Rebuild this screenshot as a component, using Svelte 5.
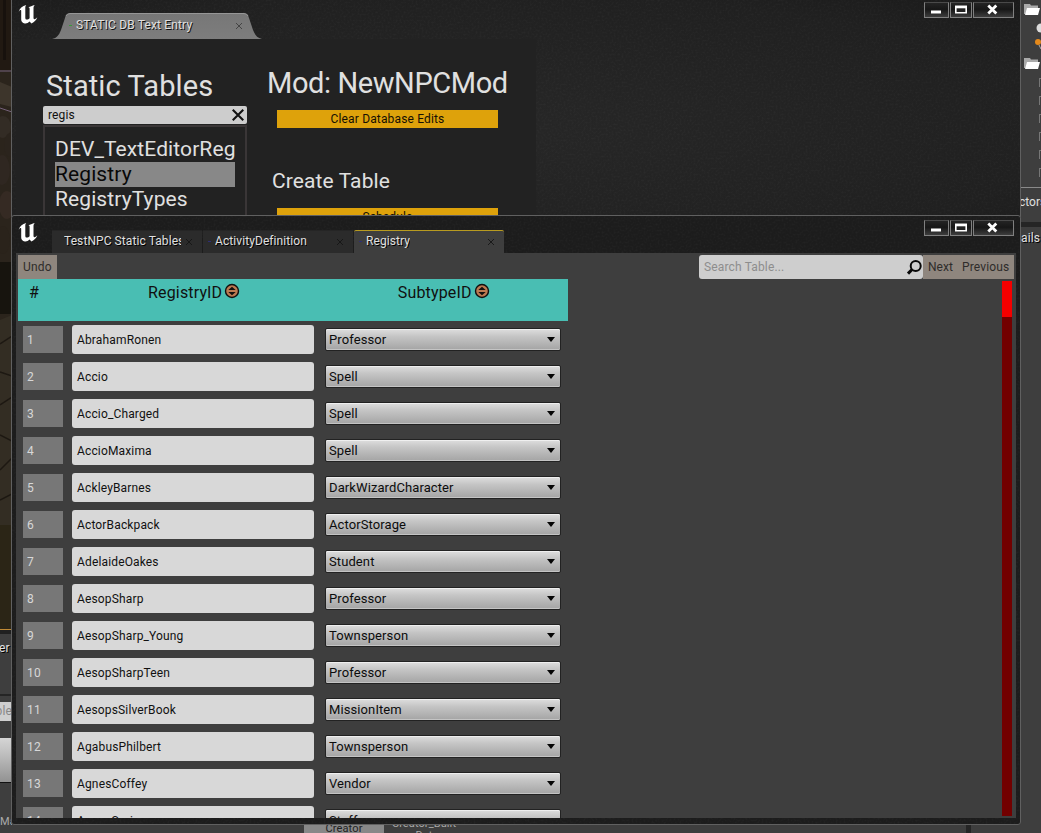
<script lang="ts">
  type Row = { id: string; subtype: string };

  const rows: Row[] = [
    { id: 'AbrahamRonen', subtype: 'Professor' },
    { id: 'Accio', subtype: 'Spell' },
    { id: 'Accio_Charged', subtype: 'Spell' },
    { id: 'AccioMaxima', subtype: 'Spell' },
    { id: 'AckleyBarnes', subtype: 'DarkWizardCharacter' },
    { id: 'ActorBackpack', subtype: 'ActorStorage' },
    { id: 'AdelaideOakes', subtype: 'Student' },
    { id: 'AesopSharp', subtype: 'Professor' },
    { id: 'AesopSharp_Young', subtype: 'Townsperson' },
    { id: 'AesopSharpTeen', subtype: 'Professor' },
    { id: 'AesopsSilverBook', subtype: 'MissionItem' },
    { id: 'AgabusPhilbert', subtype: 'Townsperson' },
    { id: 'AgnesCoffey', subtype: 'Vendor' },
    { id: 'AgnesSpring', subtype: 'Staff' },
  ];

  const tabs = ['TestNPC Static Tables', 'ActivityDefinition', 'Registry'];
  const tables = ['DEV_TextEditorReg', 'Registry', 'RegistryTypes'];

  let activeTab = $state(2);
  let activeTable = $state('Registry');
</script>

{#snippet logo()}
  <svg class="logo" viewBox="0 0 20 20">
    <path d="M0.6 8.2C1.6 4.4 4.2 2 8.3 1C7.5 1.9 7.3 2.6 7.3 3.8V13.7C7.3 15 7.8 15.6 8.8 15.6C10 15.6 10.9 15.1 11.6 14.3V4.8C11.6 3.8 11.2 3.4 10.3 3.5C12.2 2.7 14.2 1.6 16.8 1C15.8 2 15.5 2.8 15.5 4V13.8C15.5 15 16 15.4 16.8 15.2C17.5 15 18.3 14.4 19.3 13.3C18.4 16 16.5 18 13.4 19.6L11.6 17.5C10.2 19 8.5 19.6 6.8 19.4C4.4 19.1 3.2 17.8 3.2 15.6V6.8C3.2 5.8 2.6 5.8 2 6.3C1.5 6.8 1 7.4 .6 8.2Z" />
  </svg>
{/snippet}

{#snippet controls()}
  <div class="controls">
    <button class="ctl"><svg width="23" height="14"><path d="M6 7.5h10v3H6z" fill="#fff" /></svg></button>
    <button class="ctl max"><svg width="20" height="14"><path d="M4.8 3.5h10.4v6.2H4.8z" fill="#222" stroke="#fff" stroke-width="1.6" /><path d="M4 2.7h12v2.6H4z" fill="#fff" /></svg></button>
    <button class="ctl close"><svg width="39" height="14"><path d="M14.3 2.5l8 8M22.3 2.5l-8 8" stroke="#fff" stroke-width="2.8" /></svg></button>
  </div>
{/snippet}

{#snippet cross(size: number)}
  <svg class="cross" width={size} height={size} viewBox="0 0 8 8"><path d="M1 1l6 6M7 1L1 7" /></svg>
{/snippet}

{#snippet folder()}
  <svg class="folder" viewBox="0 0 17 13">
    <path d="M0 1h6l1 1.5h7V11H0z" fill="#aaa" />
    <path d="M3 5h13l-2 7H1z" fill="#fff" />
  </svg>
{/snippet}

{#snippet grain(id: string)}
  <svg class="grain" width="100%" height="100%">
    <filter {id}>
      <feTurbulence type="fractalNoise" baseFrequency="0.5" numOctaves="2" />
      <feColorMatrix values="0 0 0 0 1  0 0 0 0 1  0 0 0 0 1  1.2 0 0 0 -0.5" />
    </filter>
    <rect width="100%" height="100%" filter="url(#{id})" />
  </svg>
{/snippet}

<div class="desktop">
  <!-- viewport and panels behind the windows -->
  <div class="left-strip">
    <svg class="scene" viewBox="0 0 12 629" preserveAspectRatio="none">
      <path d="M0 0h12v629H0z" fill="#2b241c" />
      <path d="M0 0h12v70H0z" fill="#211912" />
      <path d="M3 0h3v60H3z" fill="#17110d" />
      <path d="M0 82l12 5v20l-12-3z" fill="#3d352b" />
      <ellipse cx="3" cy="127" rx="8" ry="11" fill="#332c25" />
      <ellipse cx="10" cy="145" rx="6" ry="12" fill="#2b241d" />
      <ellipse cx="2" cy="170" rx="8" ry="15" fill="#2f2721" />
      <ellipse cx="7" cy="205" rx="8" ry="14" fill="#352a23" />
      <ellipse cx="3" cy="240" rx="7" ry="14" fill="#2a231b" />
      <path d="M0 262h12v52H0z" fill="#17140e" />
      <path d="M0 320l12-5v210H0z" fill="#332d23" />
      <path d="M0 344l12-8M0 372l12 4M0 405l12-8M0 435l12 6M0 470l12-12M0 500l12-6" stroke="#1d1812" stroke-width="1.5" />
      <path d="M0 525h12v104H0z" fill="#2b2516" />
      <path d="M0 71h12M0 108l12 4" stroke="#75617a" stroke-width="1" />
    </svg>
    <div class="strip-title">er</div>
    <div class="strip-search"><span>ble</span></div>
    <div class="strip-button"></div>
    <div class="strip-foot">Ma</div>
  </div>

  <div class="right-strip">
    <div class="tree">
      {@render folder()}
      <svg class="actors" width="7" height="32"><circle cx="7" cy="8" r="4.5" fill="#ddd" /><circle cx="4" cy="22" r="3" fill="#e58a1c" /><path d="M5 25l2 4" stroke="#aaa" /></svg>
      {@render folder()}
      <div class="marks">
        {#each [0, 1, 2, 3, 4, 5] as mark (mark)}
          <i></i>
        {/each}
      </div>
    </div>
    <div class="actor-count"><span>ctors</span></div>
    <div class="details"><span>ails</span></div>
  </div>

  <div class="bottom-strip">
    <div class="creator"><span>Creator</span></div>
    <div class="asset"><span>Creator_Built</span><span>Dat</span></div>
    <div class="divider"></div>
  </div>

  <section class="window back">
    {@render grain('grain-back')}
    <header class="titlebar">
      {@render logo()}
      <div class="major-tab">
        <svg class="tab-shape" viewBox="0 0 210 26">
          <defs>
            <linearGradient id="tab" x1="0" y1="0" x2="0" y2="1">
              <stop offset="0" stop-color="#777" />
              <stop offset="1" stop-color="#7d7d7d" />
            </linearGradient>
          </defs>
          <path d="M0 26C5 25 7 22 9 17L13 5C14 1.5 15 .5 18 .5H192C195 .5 196 1.5 197 5L201 17C203 22 205 25 210 26Z" fill="url(#tab)" />
          <path d="M14 3Q15 .5 18 .5H192Q195 .5 196 3" fill="none" stroke="#969696" />
        </svg>
        <i class="dot green"></i>
        <span>STATIC DB Text Entry</span>
        {@render cross(8)}
      </div>
      {@render controls()}
    </header>
    <div class="entry">
      <div class="tables">
        <h1>Static Tables</h1>
        <div class="filter"><span>regis</span>{@render cross(14)}</div>
        <ul>
          {#each tables as table (table)}
            <li>
              <button class:selected={table === activeTable} onclick={() => (activeTable = table)}>{table}</button>
            </li>
          {/each}
        </ul>
      </div>
      <div class="mod">
        <h1>Mod: NewNPCMod</h1>
        <button class="gold">Clear Database Edits</button>
        <h2>Create Table</h2>
        <button class="gold">Schedule</button>
      </div>
    </div>
  </section>

  <section class="window front">
    {@render grain('grain-front')}
    <header class="titlebar">
      {@render logo()}
      <nav class="tabs">
        {#each tabs as tab, i (tab)}
          <button class="tab" class:active={i === activeTab} onclick={() => (activeTab = i)}>
            <i class="dot" class:hidden={i === 0}></i>
            <span class="tab-name">{tab}</span>
            {@render cross(8)}
          </button>
        {/each}
      </nav>
      {@render controls()}
    </header>
    <div class="content">
      <div class="toolbar">
        <button class="tool undo">Undo</button>
        <div class="search">
          <span>Search Table...</span>
          <svg width="17" height="17" viewBox="0 0 17 17"><circle cx="9.7" cy="7" r="5" /><path d="M6 10.5L2 14.6" /></svg>
        </div>
        <button class="tool next">Next</button>
        <button class="tool prev">Previous</button>
      </div>
      <div class="body">
        <div class="table">
          <div class="thead">
            <span class="hash">#</span>
            {#each ['RegistryID', 'SubtypeID'] as column (column)}
              <span class="column">
                {column}
                <svg width="16" height="16" viewBox="0 0 16 16">
                  <circle cx="8" cy="8" r="6.5" fill="#bd7a52" stroke="#101010" stroke-width="1.4" />
                  <path d="M4.3 7L8 3.7L11.7 7zM4.3 9L8 12.3L11.7 9z" fill="#14100e" />
                </svg>
              </span>
            {/each}
          </div>
          {#each rows as row, i (row.id)}
            <div class="row">
              <div class="num">{i + 1}</div>
              <div class="field"><span>{row.id}</span></div>
              <button class="select"><span>{row.subtype}</span><i class="arrow"></i></button>
            </div>
          {/each}
        </div>
        <div class="scrollbar"><div class="thumb"></div></div>
      </div>
    </div>
  </section>
</div>

<style>
  :global(body) { background: #3e3e3e; overflow: hidden; }

  .desktop {
    position: relative;
    width: 1041px;
    height: 833px;
    overflow: hidden;
    background: #3e3e3e;
    font-family: Roboto, "Liberation Sans", sans-serif;
    font-size: 12px;
    letter-spacing: 0.15px;
    color: #e0e0e0;
  }

  .desktop * { box-sizing: border-box; }
  button { font: inherit; letter-spacing: inherit; color: inherit; border: 0; padding: 0; margin: 0; background: none; text-align: left; border-radius: 0; }
  h1, h2, ul { margin: 0; padding: 0; font-weight: 400; list-style: none; }
  svg { display: block; flex-shrink: 0; }
  span { white-space: nowrap; }

  /* Background panels */
  .left-strip { width: 12px; height: 833px; overflow: hidden; display: flex; flex-direction: column; }
  .scene { width: 12px; height: 629px; }
  .strip-title {
    height: 67px;
    padding-top: 11px;
    line-height: 14px;
    background: #3e3e3e;
    border-top: 1px solid #c08a35;
    box-shadow: inset 0 4px #202020, inset 0 -2px #252525;
    text-shadow: 1px 1px #000;
    margin-left: -1px;
  }
  .strip-search { height: 19px; margin-top: 6px; background: #cfcfcf; color: #888; display: flex; justify-content: flex-end; line-height: 19px; }
  .strip-button { height: 45px; margin-top: 17px; background: linear-gradient(#d5d5d5, #bcbcbc 40%, #929292); border-bottom: 1px solid #111; }
  .strip-foot { margin-top: 32px; line-height: 14px; font-size: 11px; color: #aaa; }

  .right-strip { position: absolute; left: 1021px; top: 0; width: 20px; height: 833px; overflow: hidden; background: #3e3e3e; }
  .tree { height: 188px; padding: 3px 0 0 3px; border-bottom: 1px solid #8a8a8a; }
  .folder { width: 17px; height: 13px; }
  .actors { margin: 4px 0 5px 10px; }
  .marks { display: flex; flex-direction: column; gap: 9px; padding: 8px 0 0 15px; }
  .marks i { height: 9px; width: 4px; border: 1px solid #777; border-right: 0; border-bottom: 0; }
  .actor-count { height: 34px; line-height: 28px; margin-left: -2px; letter-spacing: 0; }
  .details { border-top: 5px solid #252525; line-height: 22px; text-shadow: 1px 1px #000; }

  .bottom-strip { position: absolute; left: 304px; top: 818px; width: 720px; height: 15px; display: flex; overflow: hidden; }
  .creator { width: 80px; background: #888; color: #222; text-align: center; line-height: 21px; font-size: 11px; }
  .asset { width: 80px; font-size: 11px; letter-spacing: 0.1px; color: #aaa; text-align: center; display: flex; flex-direction: column; line-height: 12px; }
  .divider { width: 5px; margin-left: 502px; background: #252525; }

  /* Windows */
  .window { position: absolute; left: 11px; width: 1010px; border: 1px solid #606060; border-top: 0; background: #1c1c1c; }
  .back { top: 0; height: 217px; background: radial-gradient(ellipse at 45% 60%, #272727, #202020 75%, #1a1a1a); }
  .front { top: 215px; height: 610px; border-top: 1px solid #606060; border-radius: 3px; background: #1c1c1c; }
  .grain { position: absolute; left: 0; top: 0; opacity: .06; }
  .titlebar { position: relative; display: flex; align-items: flex-start; padding-left: 5px; }
  .back .titlebar { height: 39px; }
  .front .titlebar { height: 37px; }
  .logo { width: 20px; height: 20px; fill: #fff; margin: 4px 0 0 1px; }
  .front .logo { margin-top: 6px; }

  .controls { display: flex; margin: 2px 6px 0 auto; gap: 1px; }
  .front .controls { margin-top: 4px; }
  .ctl { height: 16px; width: 25px; border: 1px solid #808080; border-top-color: #4a4a4a; background: linear-gradient(#242424, #171717 45%, #3d3d3d); overflow: hidden; }
  .ctl.max { width: 22px; }
  .ctl.close { width: 41px; }

  .cross { fill: none; stroke: currentColor; }
  .dot { width: 3px; height: 1px; background: #2d2d78; }
  .dot.hidden { visibility: hidden; }
  .dot.green { background: #3a9a3a; }

  .major-tab { position: relative; display: flex; align-items: center; width: 210px; height: 26px; margin: 13px 0 0 14px; padding: 0 19px 2px 17px; text-shadow: 1px 1px #111; }
  .tab-shape { position: absolute; left: 0; top: 0; width: 210px; height: 26px; }
  .major-tab > span, .major-tab > .dot, .major-tab > .cross { position: relative; }
  .major-tab > span { margin-left: 4px; }
  .major-tab > .cross { margin-left: auto; top: 1px; color: #444; }

  .entry { position: relative; display: flex; height: 177px; width: 520px; margin-left: 4px; background: #222; overflow: hidden; }
  .tables { width: 204px; margin-left: 27px; padding-top: 29px; }
  .tables h1 { font-size: 29px; line-height: 36px; padding-left: 3px; letter-spacing: 0.1px; }
  .filter { display: flex; align-items: center; justify-content: space-between; height: 18px; margin-top: 2px; padding: 0 2px 1px 5px; border-radius: 2px; background: #cdcdcd; color: #111; }
  .filter .cross { stroke-width: 1.2; }
  .tables ul { height: 100px; margin-top: 1px; padding: 10px; border: 2px solid #3a3637; }
  .tables li button { display: block; width: 180px; height: 25px; line-height: 25px; font-size: 21px; letter-spacing: 0.1px; }
  .tables li button.selected { background: #888; color: #080808; }

  .mod { width: 245px; margin-left: 20px; padding-top: 26px; }
  .mod h1 { font-size: 29px; line-height: 36px; letter-spacing: -0.4px; white-space: nowrap; }
  .mod h2 { font-size: 21px; line-height: 26px; margin: 40px 0 14px 5px; letter-spacing: 0.1px; }
  .gold { display: block; width: 221px; height: 18px; margin-left: 10px; background: #dea20b; color: #161003; text-align: center; line-height: 18px; }
  .mod h1 + .gold { margin-top: 9px; }

  .tabs { display: flex; gap: 1px; margin: 14px 0 0 14px; }
  .tab { display: flex; align-items: center; width: 150px; height: 23px; padding: 0 9px 2px 5px; background: #2b2b2b; text-shadow: 1px 1px #000; border-top: 1px solid #252525; }
  .tab.active { background: #3e3e3e; border-top: 1px solid #b89b20; border-radius: 2px 2px 0 0; }
  .tab-name { max-width: 117px; overflow: hidden; margin-left: 4px; letter-spacing: 0.08px; }
  .tab .cross { margin-left: auto; color: #151515; stroke-width: .9; position: relative; top: 1px; }

  .content { position: relative; width: 1000px; height: 565px; margin-left: 4px; padding: 2px 2px 0; background: #3e3e3e; }
  .toolbar { display: flex; height: 24px; line-height: 24px; color: #2e2c2a; }
  .tool { background: #8f867e; padding: 0 5px; }
  .next { width: 34px; letter-spacing: 0; }
  .prev { width: 57px; }
  .undo { width: 39px; }
  .search { display: flex; align-items: center; justify-content: space-between; width: 224px; margin-left: auto; padding-left: 5px; border-radius: 3px; background: #cecece; color: #8d8d8d; }
  .search svg { fill: none; stroke: #080808; stroke-width: 2; }
  .search path { stroke-width: 3; }

  .body { display: flex; justify-content: space-between; height: 539px; overflow: hidden; }
  .table { width: 550px; }
  .thead { display: flex; height: 42px; background: #49beb3; color: #101010; font-size: 16px; line-height: 27px; }
  .hash { width: 51px; padding-left: 11px; }
  .column { display: flex; justify-content: center; width: 250px; gap: 2px; padding-left: 1px; }
  .column svg { margin-top: 4px; }
  .row { display: flex; align-items: center; height: 37px; padding-left: 5px; }
  .num { width: 40px; height: 27px; line-height: 28px; padding-left: 4px; background: #777; color: #d8d8d8; }
  .field { width: 242px; height: 29px; line-height: 30px; margin-left: 9px; padding-left: 5px; border-radius: 3px; background: #d8d8d8; color: #111; }
  .select {
    display: flex;
    align-items: center;
    justify-content: space-between;
    width: 236px;
    height: 23px;
    margin-left: 11px;
    padding: 0 5px 0 3px;
    border: 1px solid #222;
    border-radius: 2px;
    background: linear-gradient(#dedede, #c5c5c5 35%, #a4a4a4);
    box-shadow: inset 0 1px #efefef, inset 0 -1px #c4c4c4;
    color: #0c0c0c;
    font-size: 13px;
    letter-spacing: 0.1px;
  }
  .arrow { border: 4px solid transparent; border-top: 5px solid #050505; border-bottom: 0; }

  .scrollbar { width: 10px; height: 535px; margin: 2px 2px 0 0; background: #720000; }
  .thumb { height: 36px; background: #f50000; }
</style>
